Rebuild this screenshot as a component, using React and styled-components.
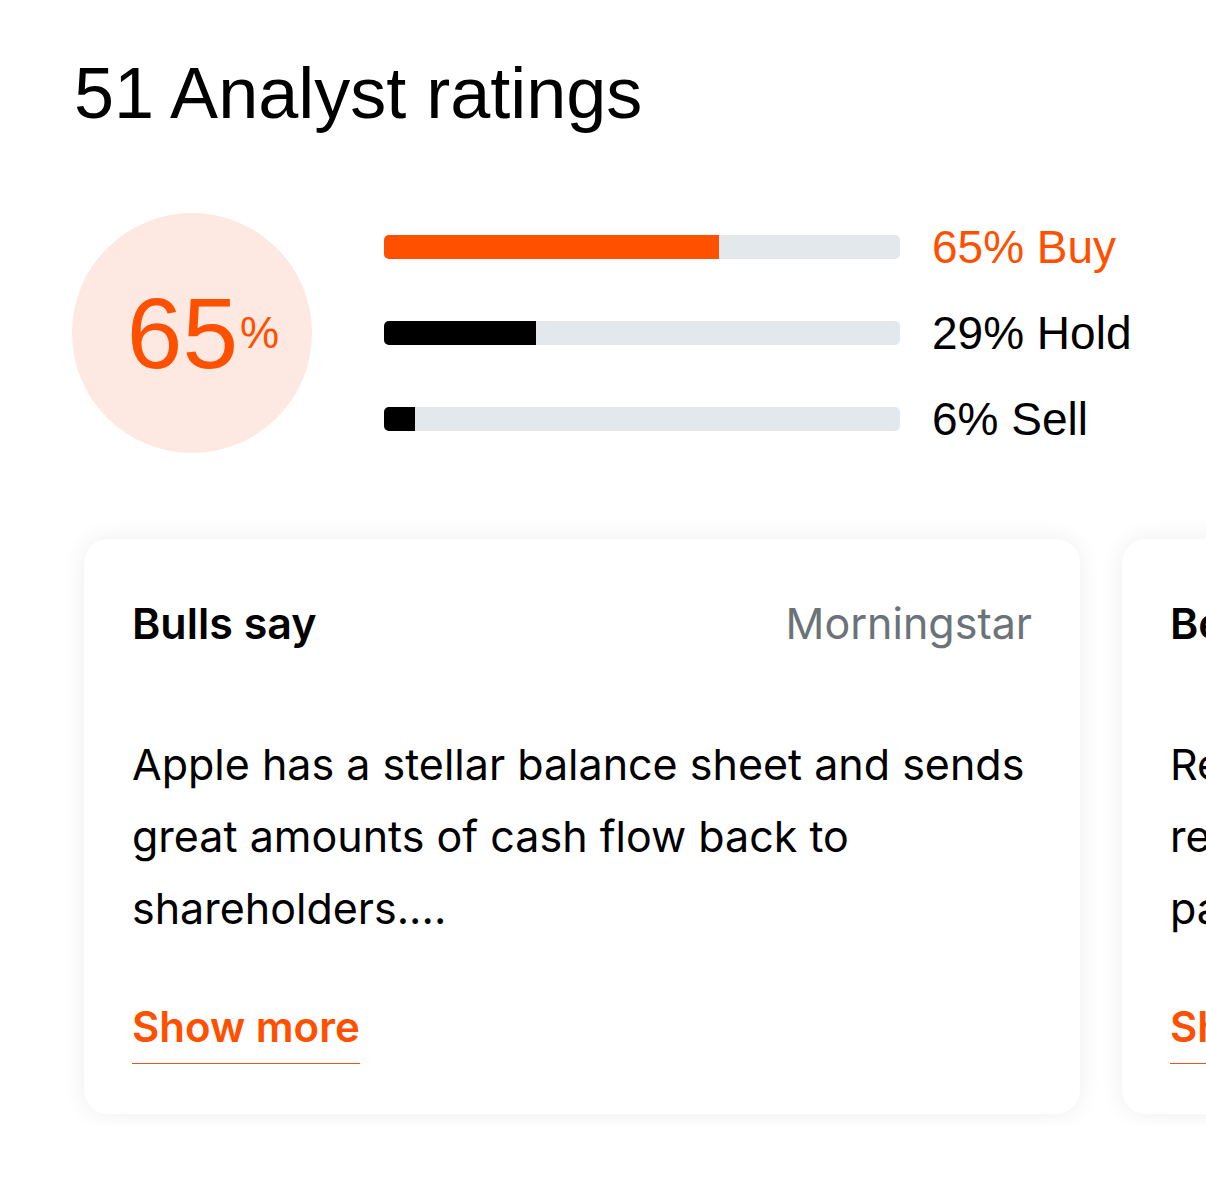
import styled, { createGlobalStyle } from "styled-components";

const GlobalStyle = createGlobalStyle`
  html, body {
    margin: 0;
    padding: 0;
    background: #fff;
    overflow-x: hidden;
  }
  * {
    box-sizing: border-box;
  }
`

const Page = styled.div`
  width: 1206px;
  padding-top: 57px;
  font-family: "Liberation Sans", Arial, sans-serif;
  color: #000;
`

const Title = styled.h1`
  margin: 0 0 0 74px;
  font-size: 72px;
  line-height: 72px;
  font-weight: 400;
`

const Summary = styled.div`
  display: flex;
  align-items: center;
  gap: 72px;
  margin: 75px 0 0 72px;
`

const Circle = styled.div`
  width: 240px;
  height: 240px;
  border-radius: 50%;
  background: #fde9e1;
  color: #ff5000;
  display: flex;
  align-items: center;
  justify-content: center;
  padding-left: 22px;
  flex-shrink: 0;
`

const Big = styled.span`
  font-size: 100px;
  line-height: 1;
`

const Small = styled.span`
  font-size: 44px;
  line-height: 1;
  margin-left: 2px;
`

const Bars = styled.div`
  display: flex;
  flex-direction: column;
`

const BarRow = styled.div`
  height: 86px;
  display: flex;
  align-items: center;
  gap: 32px;
`

const Track = styled.div`
  width: 516px;
  height: 24px;
  border-radius: 5px;
  background: #e3e8ec;
  overflow: hidden;
`

const Fill = styled.div`
  height: 100%;
  background: ${(p) => p.color};
`

const Label = styled.span`
  font-size: 46px;
  line-height: 1;
  white-space: nowrap;
  color: ${(p) => p.color};
`

const Scroller = styled.div`
  display: flex;
  align-items: flex-start;
  gap: 42px;
  margin-top: 53px;
  padding: 24px 0 11px 84px;
  overflow: hidden;
`

const Card = styled.div`
  flex: 0 0 996px;
  padding: 48px 48px 50px;
  border-radius: 24px;
  background: #fff;
  box-shadow: 0 0 24px rgba(0, 0, 0, 0.07);
  font-family: Inter, "Noto Sans", sans-serif;
  font-size: 43px;
`

const CardHead = styled.div`
  display: flex;
  justify-content: space-between;
  align-items: baseline;
  line-height: 72px;
`

const CardTitle = styled.span`
  font-weight: 600;
  color: #000;
`

const Source = styled.span`
  color: #6b7379;
`

const Body = styled.p`
  margin: 69px 0 47px;
  line-height: 72px;
  color: #000;
`

const ShowMore = styled.a`
  display: inline-block;
  line-height: 72px;
  font-size: 42px;
  font-weight: 600;
  color: #ff5000;
  text-decoration: none;
  border-bottom: 1px solid #e8561a;
`

const ratings = [
  { pct: 65, label: "Buy", fill: "#ff5000", text: "#ff5000" },
  { pct: 29.5, label: "Hold", shown: 29, fill: "#000", text: "#000" },
  { pct: 6, label: "Sell", fill: "#000", text: "#000" },
]

const App = () => {
  return (
    <>
      <GlobalStyle />
      <Page>
        <Title>51 Analyst ratings</Title>
        <Summary>
          <Circle>
            <Big>65</Big>
            <Small>%</Small>
          </Circle>
          <Bars>
            {ratings.map((r) => (
              <BarRow key={r.label}>
                <Track>
                  <Fill color={r.fill} style={{ width: `${r.pct}%` }} />
                </Track>
                <Label color={r.text}>
                  {r.shown ?? r.pct}% {r.label}
                </Label>
              </BarRow>
            ))}
          </Bars>
        </Summary>
        <Scroller>
          <Card>
            <CardHead>
              <CardTitle>Bulls say</CardTitle>
              <Source>Morningstar</Source>
            </CardHead>
            <Body>
              Apple has a stellar balance sheet and sends great amounts of cash
              flow back to shareholders....
            </Body>
            <ShowMore href="#">Show more</ShowMore>
          </Card>
          <Card>
            <CardHead>
              <CardTitle>Bears say</CardTitle>
              <Source>Morningstar</Source>
            </CardHead>
            <Body>
              Regulatory scrutiny of the App Store
              <br />
              remains a risk to services revenue and
              <br />
              partner margins....
            </Body>
            <ShowMore href="#">Show more</ShowMore>
          </Card>
        </Scroller>
      </Page>
    </>
  )
}

export default App;
